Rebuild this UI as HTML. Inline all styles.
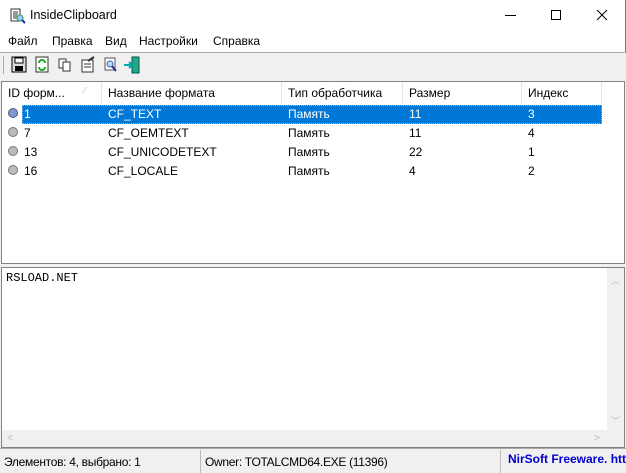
<!DOCTYPE html>
<html><head><meta charset="utf-8"><style>
*{margin:0;padding:0;box-sizing:border-box}
body{width:626px;height:473px;overflow:hidden;background:#f0f0f0;font-family:"Liberation Sans","DejaVu Sans",sans-serif;font-size:12px;color:#000;position:relative}
.a{position:absolute;white-space:nowrap}
</style></head><body>
<div class="a" style="left:0;top:0;width:626px;height:52px;background:#fff;border-right:1px solid #777"></div>
<svg class="a" style="left:9px;top:7px" width="18" height="18" viewBox="0 0 18 18"><rect x="2" y="2" width="9" height="12" fill="#fff" stroke="#333"/><path d="M4 5h5M4 7h5M4 9h5M4 11h4" stroke="#333"/><circle cx="11" cy="11" r="3" fill="#9cf" stroke="#2a5"/><path d="M13 13l3 3" stroke="#22a" stroke-width="2"/></svg>
<div class="a" style="left:30px;top:8px;font-size:12.5px">InsideClipboard</div>
<div class="a" style="left:505px;top:15px;width:11px;height:1px;background:#000"></div>
<div class="a" style="left:551px;top:10px;width:10px;height:10px;border:1px solid #000"></div>
<svg class="a" style="left:596px;top:9px" width="12" height="12"><path d="M1 1L11 11M11 1L1 11" stroke="#000"/></svg>
<div class="a" style="left:8px;top:34px">Файл</div>
<div class="a" style="left:52px;top:34px">Правка</div>
<div class="a" style="left:105px;top:34px">Вид</div>
<div class="a" style="left:139px;top:34px">Настройки</div>
<div class="a" style="left:213px;top:34px">Справка</div>
<div class="a" style="left:0;top:52px;width:626px;height:1px;background:#aaa"></div>
<div class="a" style="left:3px;top:56px;width:1px;height:18px;background:#aaa"></div>
<svg class="a" style="left:10px;top:55px" width="140" height="20">
<rect x="2" y="2" width="14" height="15" fill="#ddd" stroke="#000"/><rect x="5" y="3" width="8" height="5" fill="#fff" stroke="#000"/><rect x="5" y="11" width="8" height="5" fill="#000"/>
<rect x="26" y="2" width="12" height="15" fill="#fff" stroke="#333"/><path d="M29 8a3 3 0 0 1 6 0M35 12a3 3 0 0 1-6 0" stroke="#2a2" stroke-width="2" fill="none"/>
<rect x="49" y="4" width="7" height="9" fill="#fff" stroke="#333"/><rect x="53" y="7" width="7" height="9" fill="#fff" stroke="#333"/>
<rect x="72" y="5" width="11" height="12" fill="#fff" stroke="#333"/><path d="M74 9h7M74 12h7" stroke="#333"/><path d="M78 6l6-4" stroke="#333" stroke-width="2"/>
<rect x="95" y="3" width="10" height="12" fill="#fff" stroke="#555"/><circle cx="100" cy="9" r="3" fill="#bdf" stroke="#36a"/><path d="M102 11l4 5" stroke="#238" stroke-width="2"/>
<rect x="122" y="2" width="7" height="16" fill="#2a8" stroke="#055"/><path d="M114 10h8M119 7l3 3-3 3" stroke="#0aa" stroke-width="2" fill="none"/>
</svg>
<div class="a" style="left:1px;top:81px;width:624px;height:183px;background:#fff;border:1px solid #828282"></div>
<div class="a" style="left:8px;top:86px">ID форм...</div>
<div class="a" style="left:84px;top:86px;color:#aaa;font-size:8px">⁄</div>
<div class="a" style="left:101px;top:82px;width:1px;height:22px;background:#e5e5e5"></div>
<div class="a" style="left:108px;top:86px">Название формата</div>
<div class="a" style="left:281px;top:82px;width:1px;height:22px;background:#e5e5e5"></div>
<div class="a" style="left:288px;top:86px">Тип обработчика</div>
<div class="a" style="left:402px;top:82px;width:1px;height:22px;background:#e5e5e5"></div>
<div class="a" style="left:409px;top:86px">Размер</div>
<div class="a" style="left:521px;top:82px;width:1px;height:22px;background:#e5e5e5"></div>
<div class="a" style="left:528px;top:86px">Индекс</div>
<div class="a" style="left:601px;top:82px;width:1px;height:22px;background:#e5e5e5"></div>
<div class="a" style="left:22px;top:105px;width:580px;height:19px;background:#0078d7;outline:1px dotted #9bd;outline-offset:-1px"></div>
<div class="a" style="left:0;top:106px;width:626px;color:#fff">
<div class="a" style="left:8px;top:2px;width:10px;height:10px;border-radius:50%;background:#7a9ccc;border:1px solid #557"></div>
<div class="a" style="left:24px;top:1px">1</div><div class="a" style="left:108px;top:1px">CF_TEXT</div><div class="a" style="left:288px;top:1px">Память</div><div class="a" style="left:409px;top:1px">11</div><div class="a" style="left:528px;top:1px">3</div></div>
<div class="a" style="left:0;top:126px;width:626px">
<div class="a" style="left:8px;top:1px;width:10px;height:10px;border-radius:50%;background:#bbb;border:1px solid #777"></div>
<div class="a" style="left:24px;top:0">7</div><div class="a" style="left:108px;top:0">CF_OEMTEXT</div><div class="a" style="left:288px;top:0">Память</div><div class="a" style="left:409px;top:0">11</div><div class="a" style="left:528px;top:0">4</div></div>
<div class="a" style="left:0;top:145px;width:626px">
<div class="a" style="left:8px;top:1px;width:10px;height:10px;border-radius:50%;background:#bbb;border:1px solid #777"></div>
<div class="a" style="left:24px;top:0">13</div><div class="a" style="left:108px;top:0">CF_UNICODETEXT</div><div class="a" style="left:288px;top:0">Память</div><div class="a" style="left:409px;top:0">22</div><div class="a" style="left:528px;top:0">1</div></div>
<div class="a" style="left:0;top:164px;width:626px">
<div class="a" style="left:8px;top:1px;width:10px;height:10px;border-radius:50%;background:#bbb;border:1px solid #777"></div>
<div class="a" style="left:24px;top:0">16</div><div class="a" style="left:108px;top:0">CF_LOCALE</div><div class="a" style="left:288px;top:0">Память</div><div class="a" style="left:409px;top:0">4</div><div class="a" style="left:528px;top:0">2</div></div>
<div class="a" style="left:1px;top:267px;width:624px;height:181px;background:#fff;border:1px solid #828282"></div>
<div class="a" style="left:6px;top:271px;font-family:'Liberation Mono',monospace;font-size:12px">RSLOAD.NET</div>
<div class="a" style="left:607px;top:268px;width:17px;height:162px;background:#f0f0f0"></div>
<div class="a" style="left:2px;top:430px;width:605px;height:17px;background:#f0f0f0"></div>
<div class="a" style="left:607px;top:430px;width:17px;height:17px;background:#f0f0f0"></div>
<div class="a" style="left:611px;top:274px;color:#bbb;font-size:9px">︿</div>
<div class="a" style="left:611px;top:414px;color:#bbb;font-size:9px">﹀</div>
<div class="a" style="left:7px;top:433px;color:#bbb;font-size:10px">&lt;</div>
<div class="a" style="left:594px;top:433px;color:#bbb;font-size:10px">&gt;</div>
<div class="a" style="left:0;top:448px;width:626px;height:25px;background:#f0f0f0;border-top:1px solid #aaa"></div>
<div class="a" style="left:200px;top:450px;width:1px;height:23px;background:#bbb"></div>
<div class="a" style="left:500px;top:450px;width:1px;height:23px;background:#bbb"></div>
<div class="a" style="left:4px;top:455px;font-size:12px;letter-spacing:-0.3px">Элементов: 4, выбрано: 1</div>
<div class="a" style="left:205px;top:455px;font-size:12px;letter-spacing:-0.3px">Owner: TOTALCMD64.EXE (11396)</div>
<div class="a" style="left:508px;top:452px;font-size:12px;color:#00c;font-weight:bold">NirSoft Freeware. htt</div>
</body></html>
